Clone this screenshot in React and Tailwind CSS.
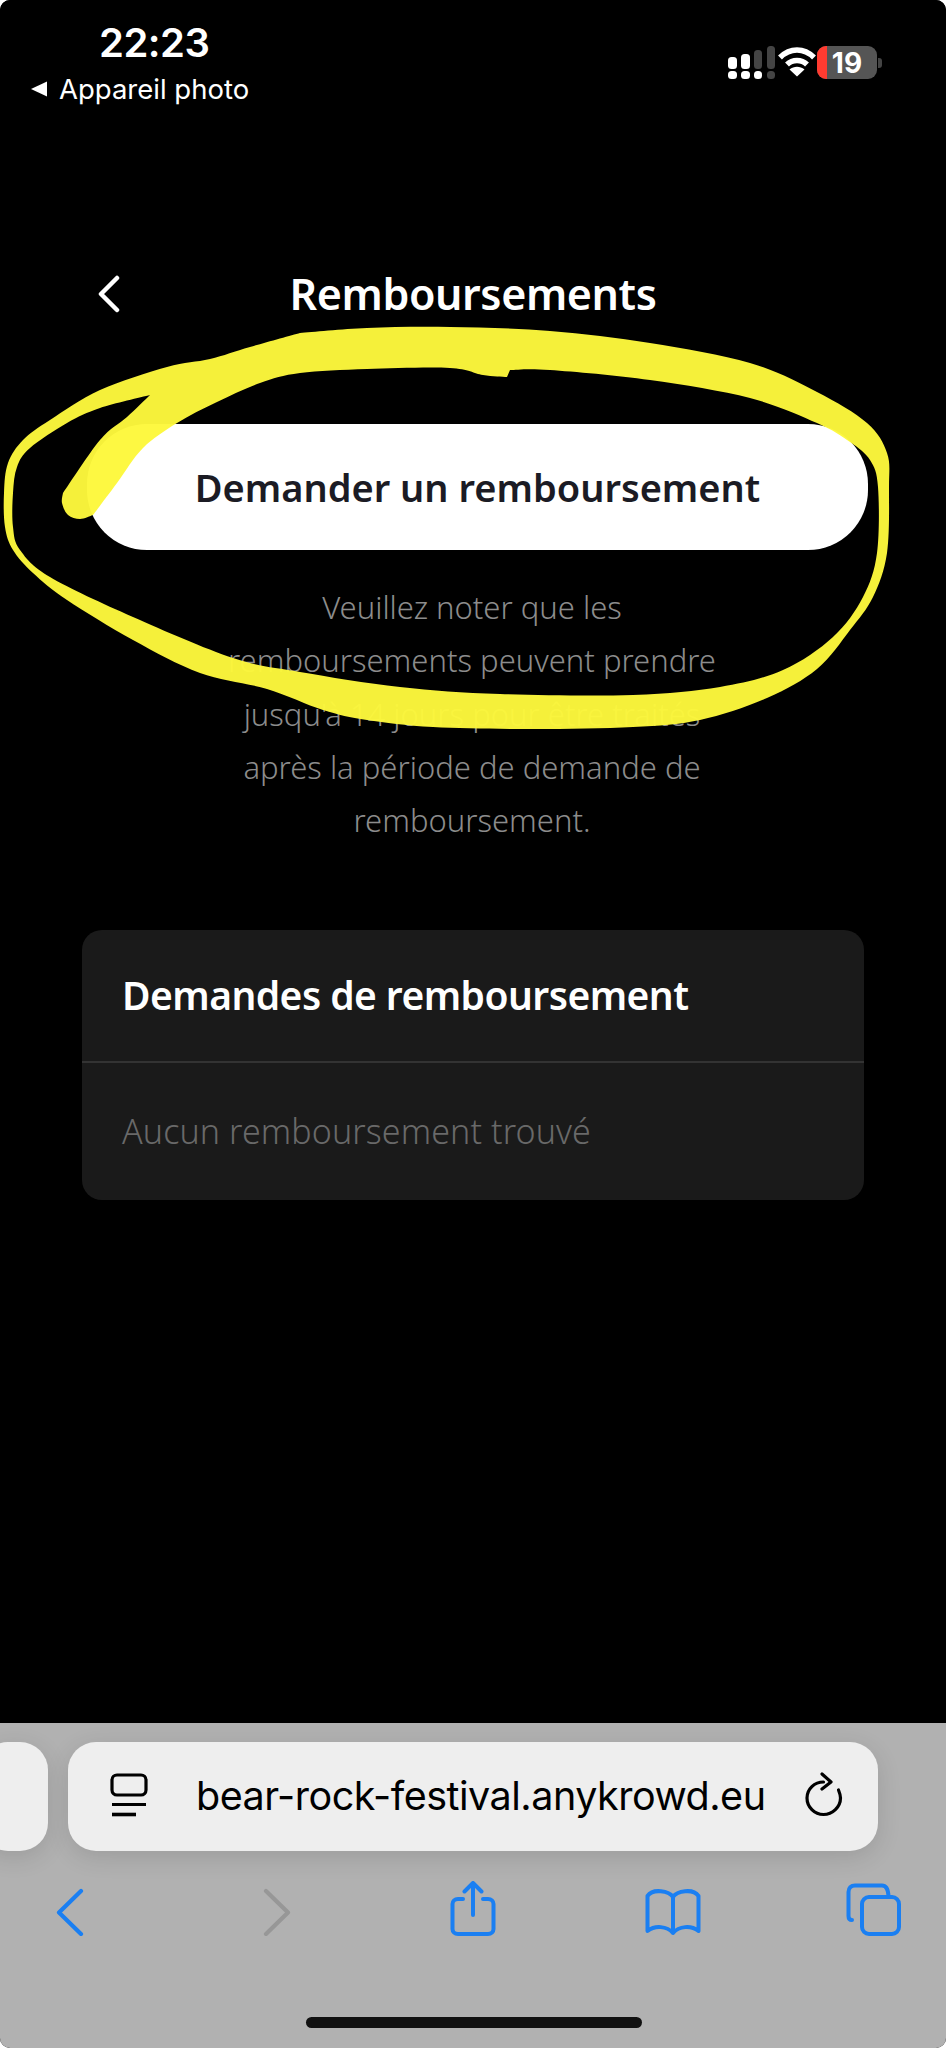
import React from "react";

// Catmull-Rom smoothing for the hand-drawn marker stroke
const seg = (p) => {
  let d = "";
  for (let i = 0; i < p.length - 1; i++) {
    const a = p[Math.max(i - 1, 0)], b = p[i], c = p[i + 1], e = p[Math.min(i + 2, p.length - 1)];
    const c1 = [b[0] + (c[0] - a[0]) / 6, b[1] + (c[1] - a[1]) / 6];
    const c2 = [c[0] - (e[0] - b[0]) / 6, c[1] - (e[1] - b[1]) / 6];
    d += `C${c1[0].toFixed(1)} ${c1[1].toFixed(1)} ${c2[0].toFixed(1)} ${c2[1].toFixed(1)} ${c[0]} ${c[1]}`;
  }
  return d;
};
const outer = [[300,333],[367,328],[450,327],[550,331],[650,343],[750,363],[817,392],[867,423],[887,453],[889,487],[887,553],[873,597],[850,630],[817,669],[767,698],[700,720],[633,727],[533,729],[433,727],[367,720],[323,710],[267,689],[200,673],[133,640],[67,600],[33,573],[13,550],[5,527],[4,493],[8,463],[23,440],[50,420],[100,390],[167,367],[210,359],[250,347],[300,333]];
const innerA = [[510,370],[550,370],[650,380],[750,398],[817,423],[850,442],[870,460],[878,487],[877,553],[863,597],[833,637],[783,670],[720,687],[633,695],[500,694],[400,687],[300,672],[233,658],[133,617],[50,577],[20,550],[13,527],[13,493],[17,467],[30,448],[67,423],[100,408],[150,395]];
const innerB = [[150,395],[127,417],[100,440],[63,493]];
const blob = [[63,493],[62,503],[68,515],[80,519],[93,515]];
const innerC = [[93,515],[117,483],[143,448],[177,423],[217,402],[260,383],[300,373],[367,369],[450,368],[483,375],[507,377]];
const mark = `M300 333${seg(outer)}Z M510 370${seg(innerA)}${seg(innerB)}${seg(blob)}${seg(innerC)}L510 370Z`;

const sans = "font-['Noto_Sans',sans-serif]";
const ios = "font-['Inter',sans-serif]";

const Icon = ({ w, h, className = "", children }) => (
  <svg width={w} height={h} viewBox={`0 0 ${w} ${h}`} fill="none" strokeLinecap="round" strokeLinejoin="round" className={`block shrink-0 ${className}`}>
    {children}
  </svg>
);

const Signal = () => (
  <Icon w={50} h={36}>
    <rect x="1" y="11" width="9" height="12" rx="3.5" fill="#fff" />
    <rect x="14" y="8" width="9" height="15" rx="3.5" fill="#fff" />
    <rect x="27" y="4" width="8" height="19" rx="3.5" fill="#444" />
    <rect x="40" y="0" width="8" height="23" rx="3.5" fill="#444" />
    <rect x="1" y="25" width="9" height="8" rx="3.5" fill="#fff" />
    <rect x="14" y="25" width="9" height="8" rx="3.5" fill="#fff" />
    <rect x="27" y="25" width="8" height="8" rx="3.5" fill="#fff" />
    <rect x="40" y="25" width="8" height="8" rx="3.5" fill="#444" />
  </Icon>
);

const Wifi = () => (
  <Icon w={40} h={31}>
    <path d="M3 11.5C13 1.5 27 1.5 37 11.5" stroke="#fff" strokeWidth="5.5" strokeLinecap="butt" />
    <path d="M10 18.5C15.5 13 24.5 13 30 18.5" stroke="#fff" strokeWidth="5.5" strokeLinecap="butt" />
    <path d="M20 30.5L12.5 23.5C17 19.7 23 19.7 27.5 23.5Z" fill="#fff" />
  </Icon>
);

const Battery = () => (
  <div className="flex items-center">
    <div className="relative w-[60px] h-[33px] rounded-[9px] bg-[#555] overflow-hidden flex items-center justify-center">
      <div className="absolute left-0 top-0 bottom-0 w-[10px] bg-[#ff3b30]" />
      <span className={`relative ${ios} text-[28px] font-bold leading-none text-white`}>19</span>
    </div>
    <div className="ml-[1px] w-[4px] h-[10px] rounded-r-[3px] bg-[#444]" />
  </div>
);

export default function App() {
  return (
    <div className="relative w-[946px] h-[2048px] bg-white overflow-hidden">
      <div className="w-full h-full rounded-[10px] overflow-hidden flex flex-col bg-black">
        <div className="h-[1723px] shrink-0 bg-black">
          {/* status bar */}
          <div className="flex justify-between h-[120px]">
            <div className="pl-[30px] pt-[22px]">
              <div className={`ml-[69px] ${ios} text-[40px] leading-[42px] font-semibold text-white tracking-[-0.5px]`}>22:23</div>
              <div className="flex items-center mt-[10px]">
                <svg width="18" height="16" viewBox="0 0 18 16" className="block"><path d="M17 0.5V15.5L1 8Z" fill="#fff" /></svg>
                <span className={`ml-[11px] ${ios} text-[27.5px] leading-[30px] font-normal text-white`}>Appareil photo</span>
              </div>
            </div>
            <div className="flex items-start pt-[46px] pr-[64px]">
              <Signal />
              <Wifi />
              <Battery />
            </div>
          </div>
          {/* header */}
          <div className="relative h-[66px] mt-[141px] flex items-center justify-center">
            <svg width="24" height="38" viewBox="0 0 24 38" className="absolute left-[97px] top-[14px]" fill="none" stroke="#fff" strokeWidth="4.5" strokeLinecap="round" strokeLinejoin="round"><path d="M20 3L4 19L20 35" /></svg>
            <h1 className={`${sans} text-[43px] leading-[66px] font-semibold text-white tracking-[-0.4px]`}>Remboursements</h1>
          </div>
          {/* CTA */}
          <div className="ml-[87px] mt-[97px] w-[781px] h-[126px] rounded-[60px] bg-white flex items-center justify-center">
            <span className={`${sans} text-[38px] font-semibold leading-none text-[#1b1b24]`}>Demander un remboursement</span>
          </div>
          {/* note */}
          <p className={`mt-[31px] ml-[172px] w-[600px] text-center ${sans} text-[31px] font-[350] leading-[53.3px] text-[#8c8c8c]`}>
            Veuillez noter que les<br />remboursements peuvent prendre<br />jusqu'à 14 jours pour être traités<br />après la période de demande de<br />remboursement.
          </p>
          {/* card */}
          <div className="ml-[82px] mt-[83px] w-[782px] h-[270px] rounded-[20px] bg-[#1a1a1a] flex flex-col">
            <div className="h-[133px] border-b-2 border-[#333] pl-[40px] flex items-center">
              <span className={`${sans} text-[39px] font-semibold leading-none text-white tracking-[-0.55px] -mt-[3px]`}>Demandes de remboursement</span>
            </div>
            <div className="flex-1 pl-[40px] flex items-center">
              <span className={`${sans} text-[34px] font-light leading-none text-[#696969] tracking-[0.1px] -mt-[2px]`}>Aucun remboursement trouvé</span>
            </div>
          </div>
        </div>

        {/* Safari bar */}
        <div className="flex-1 bg-[#b1b1b1] flex flex-col">
          <div className="mt-[19px] flex gap-[20px] -ml-[20px] w-[898px]">
            <div className="w-[68px] h-[109px] rounded-[28px] bg-[#eeeeee] shadow-[0_6px_24px_rgba(0,0,0,0.12)]" />
            <div className="w-[810px] h-[109px] rounded-[28px] bg-[#eeeeee] shadow-[0_6px_24px_rgba(0,0,0,0.12)] flex items-center">
              <Icon w={40} h={48} className="ml-[41px]">
                <rect x="3" y="2" width="34" height="20" rx="5" stroke="#000" strokeWidth="3.2" />
                <path d="M3 31.5H37" stroke="#000" strokeWidth="3.2" strokeLinecap="butt" />
                <path d="M3 41.5H27" stroke="#000" strokeWidth="3.6" strokeLinecap="butt" />
              </Icon>
              <span className={`ml-[47px] ${ios} text-[39.5px] leading-none text-black whitespace-nowrap tracking-[-0.5px] w-[569px]`}>bear-rock-festival.anykrowd.eu</span>
              <Icon w={42} h={50} className="ml-[38px]">
                <path d="M20.5 10C11.5 10 4 17 4 26C4 35 11.5 42.5 20.5 42.5C29.5 42.5 37.5 35 37.5 26C37.5 23 36.5 20.5 35.5 18" stroke="#000" strokeWidth="3.2" />
                <path d="M19 2L28 10L19 17" stroke="#000" strokeWidth="3.2" />
              </Icon>
            </div>
          </div>
          <div className="flex items-start mt-[30px]">
            <Icon w={30} h={48} className="ml-[55px] mt-[7px]">
              <path d="M26 3L4 24.5L26 46" stroke="#1a7ff2" strokeWidth="4.2" />
            </Icon>
            <Icon w={30} h={48} className="ml-[177px] mt-[7px]">
              <path d="M4 3L26 24.5L4 46" stroke="#979797" strokeWidth="4.2" />
            </Icon>
            <Icon w={50} h={60} className="ml-[156px]">
              <path d="M15 18H10C6.7 18 4.5 20 4.5 23V48C4.5 51 6.7 53 10 53H40C43.3 53 45.5 51 45.5 48V23C45.5 20 43.3 18 40 18H35" stroke="#1a7ff2" strokeWidth="4" />
              <path d="M25 34V3M16.5 10.5L25 2L33.5 10.5" stroke="#1a7ff2" strokeWidth="4" />
            </Icon>
            <Icon w={60} h={50} className="ml-[145px] mt-[5px]">
              <path d="M30 47V11C26 5 10 2 4.5 10V45C12 39 24 40 30 47C36 40 48 39 55.5 45V10C50 2 34 5 30 11" stroke="#1a7ff2" strokeWidth="4" />
            </Icon>
            <Icon w={56} h={54} className="ml-[143px] mt-[2px]">
              <path d="M6 37C3.8 37 2.5 35.5 2.5 33V9C2.5 5 5 2.5 9 2.5H36C39 2.5 42 4 42.5 13" stroke="#1a7ff2" strokeWidth="4" />
              <rect x="16" y="14" width="37" height="37" rx="7" stroke="#1a7ff2" strokeWidth="4" />
            </Icon>
          </div>
          <div className="ml-[306px] mt-[76px] w-[336px] h-[11px] rounded-full bg-[#111111]" />
        </div>
      </div>

      {/* hand-drawn highlighter annotation */}
      <svg width="946" height="2048" viewBox="0 0 946 2048" className="absolute left-0 top-0 pointer-events-none">
        <path d={mark} fill="#fdf83c" fillOpacity="0.97" fillRule="evenodd" />
      </svg>
    </div>
  );
}
